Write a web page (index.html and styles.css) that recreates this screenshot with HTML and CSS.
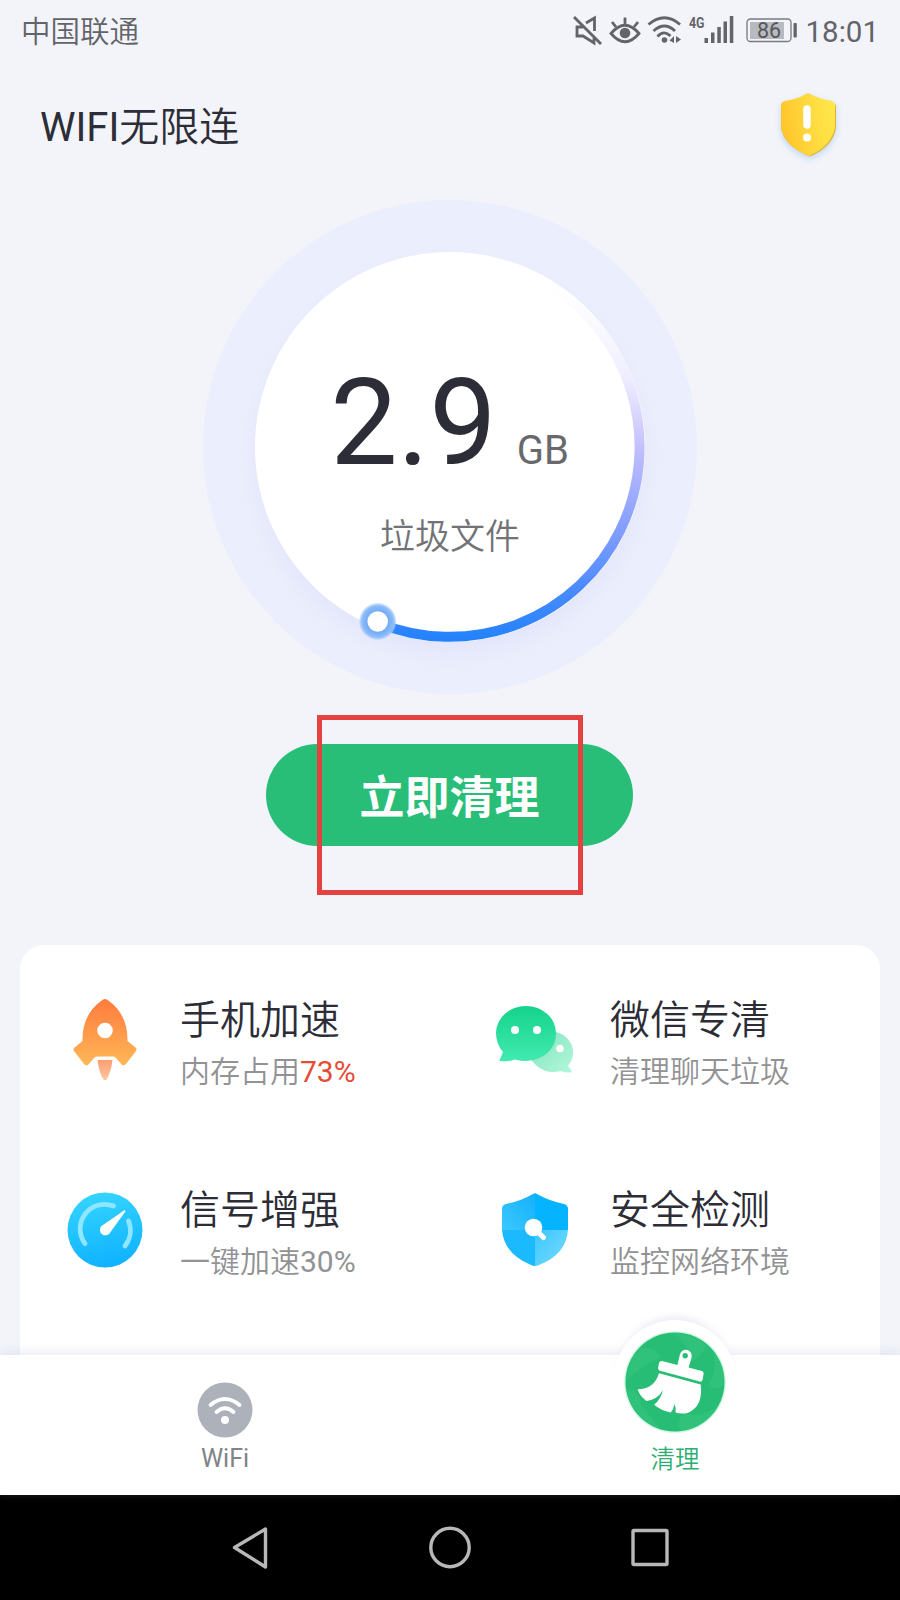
FILE: index.html
```html
<!DOCTYPE html>
<html lang="zh-CN">
<head>
    <meta charset="UTF-8">
    <title>WIFI无限连</title>
    <link rel="stylesheet" href="styles.css">
</head>
<body>
<div class="status">
    <span class="carrier">中国联通</span>
    <svg class="status-icons" width="230" height="60" viewBox="570 0 230 60">
        <!-- mute -->
        <g fill="none" stroke="#626469" stroke-width="2.8">
            <path d="M574 17L601 44"/>
            <path d="M583 27H577V36H583L594 43V38M586 23L594.500 18V31"/>
        </g>
        <!-- eye -->
        <g fill="none" stroke="#626469" stroke-width="2.8">
            <path d="M611 33.500Q625 17 639 33.500Q625 50 611 33.500Z"/>
            <path d="M612 22L616 27M625 17.500V24M638 22L634 27"/>
        </g>
        <circle cx="625" cy="33" r="5.300" fill="#626469"/>
        <!-- wifi -->
        <g fill="none" stroke="#626469" stroke-width="2.9">
            <path d="M648.500 24.500Q664.500 11 680 24.500"/>
            <path d="M653.500 31Q664.500 21 675 31"/>
            <path d="M657.500 36.500Q664 29.500 670.500 36"/>
        </g>
        <circle cx="664.500" cy="40" r="2.800" fill="#626469"/>
        <path d="M674 36V43L669.500 40.500ZM676 43V36L681 39.500Z" fill="#626469"/>
        <!-- signal -->
        <text class="net" x="689" y="28" textLength="15.500" lengthAdjust="spacingAndGlyphs">4G</text>
        <g fill="#626469">
            <rect x="704.500" y="38" width="3.500" height="5"/>
            <rect x="711" y="32.500" width="3.500" height="10.500"/>
            <rect x="717.300" y="27" width="3.500" height="16"/>
            <rect x="723.500" y="21.500" width="3.500" height="21.500"/>
            <rect x="729.800" y="16" width="3.500" height="27"/>
        </g>
        <!-- battery -->
        <rect x="747" y="19" width="44" height="22.500" rx="3.500" fill="none" stroke="#777980" stroke-width="1.300"/>
        <rect x="750" y="22" width="34" height="17" fill="#b9babf"/>
        <rect x="793.500" y="23" width="3.300" height="14.500" rx="1" fill="#626469"/>
        <text class="level" x="757" y="38">86</text>
    </svg>
    <span class="time">18:01</span>
</div>

<div class="header">
    <h1>WIFI<span>无限连</span></h1>
    <svg class="warn" width="70" height="76" viewBox="0 0 70 76">
        <defs>
            <linearGradient id="gold" x1="0" y1="0.200" x2="1" y2="0">
                <stop offset="0" stop-color="#ffc72d"/>
                <stop offset="0.550" stop-color="#ffdc40"/>
                <stop offset="1" stop-color="#fde84c"/>
            </linearGradient>
        </defs>
        <path d="M36 7Q46 13 60 16Q63 17 63 20V40Q61 59 37 69.500Q11 59 8 41V19Q8 16 12 15Q26 13 36 7Z" fill="#e3b22f"/>
        <path d="M35 6Q46 12 59 14Q62 15 62 18V39Q60 58 36 69Q11 59 8 40V18Q8 15 12 14Q25 12 35 6Z" fill="url(#gold)"/>
        <path d="M34 22V38" stroke="#fff" stroke-width="7.500" stroke-linecap="round"/>
        <circle cx="34" cy="50.500" r="4" fill="#fff"/>
    </svg>
</div>

<div class="main">
    <div class="gauge">
        <svg class="ring" width="496" height="496" viewBox="-248 -248 496 496">
            <defs>
                <linearGradient id="arc" gradientUnits="userSpaceOnUse" x1="0" y1="-160" x2="0" y2="190">
                    <stop offset="0" stop-color="#f3f1ff" stop-opacity="0"/>
                    <stop offset="0.240" stop-color="#efeeff" stop-opacity="0.900"/>
                    <stop offset="0.340" stop-color="#dfdcfe"/>
                    <stop offset="0.470" stop-color="#bfbdfc"/>
                    <stop offset="0.700" stop-color="#819dff"/>
                    <stop offset="0.860" stop-color="#4b8bfe"/>
                    <stop offset="1" stop-color="#2683fb"/>
                </linearGradient>
                <radialGradient id="halo">
                    <stop offset="0.500" stop-color="#6ba8f6"/>
                    <stop offset="0.850" stop-color="#8dbcf9"/>
                    <stop offset="1" stop-color="#b5d2fc" stop-opacity="0.500"/>
                </radialGradient>
                <filter id="soft" x="-20%" y="-20%" width="140%" height="140%">
                    <feGaussianBlur stdDeviation="13"/>
                </filter>
            </defs>
            <circle r="247" fill="#ebeefc"/>
            <circle cy="12" r="190" fill="#dcddfa" filter="url(#soft)" opacity="0.700"/>
            <circle r="195" fill="#fff"/>
            <path d="M95 -164.500A190 190 0 0 1 -72 175.800" fill="none" stroke="url(#arc)" stroke-width="10"/>
            <circle cx="-72.300" cy="174.500" r="18.500" fill="url(#halo)"/>
            <circle cx="-72.300" cy="174.500" r="10.300" fill="#fff"/>
        </svg>
        <div class="amount">
            <div class="size">2.9<span>GB</span></div>
            <div class="what">垃圾文件</div>
        </div>
    </div>
    <div class="action">
        <button class="clean">立即清理</button>
        <div class="mark"></div>
    </div>

    <div class="card">
        <div class="item">
            <svg class="icon" width="90" height="90" viewBox="0 0 90 90">
                <defs>
                    <linearGradient id="rocket" x1="0" y1="0" x2="0" y2="1">
                        <stop offset="0" stop-color="#ff7b3d"/>
                        <stop offset="1" stop-color="#ffb757"/>
                    </linearGradient>
                    <linearGradient id="flame" x1="0" y1="0" x2="0" y2="1">
                        <stop offset="0" stop-color="#ff9d70"/>
                        <stop offset="1" stop-color="#ffc9a0"/>
                    </linearGradient>
                </defs>
                <path d="M45 4Q47 4 49 6Q68 20 67.500 46L76 53Q77 54 76 56L66 69Q64 71 62 70L56 63Q55 61.500 53 61.500H37Q35 61.500 34 63L28 70Q26 71 24 69L14 56Q13 54 14 53L22.500 46Q22 20 41 6Q43 4 45 4Z" fill="url(#rocket)"/>
                <circle cx="45" cy="35.500" r="7.800" fill="#fff"/>
                <path d="M37.500 65H52.500Q51 77 47 84Q45 86.500 43 84Q39 77 37.500 65Z" fill="url(#flame)"/>
            </svg>
            <div>
                <h2>手机加速</h2>
                <p>内存占用<em class="hot">73%</em></p>
            </div>
        </div>
        <div class="item">
            <svg class="icon" width="90" height="90" viewBox="0 0 90 90">
                <defs>
                    <linearGradient id="chat" x1="0" y1="0" x2="0" y2="1">
                        <stop offset="0" stop-color="#14d38b"/>
                        <stop offset="1" stop-color="#42eab0"/>
                    </linearGradient>
                    <linearGradient id="chat2" x1="0" y1="0" x2="1" y2="1">
                        <stop offset="0" stop-color="#81e2bb"/>
                        <stop offset="1" stop-color="#b2f8dc"/>
                    </linearGradient>
                </defs>
                <path d="M63 36.500A22 21 0 0 1 78 71L82 76Q82 77.500 80 77.500Q74 77.500 71 76Q52 81 40 63Z" fill="url(#chat2)"/>
                <path d="M36 11A30 27 0 0 1 66 38A30 27 0 0 1 36 66Q30 66 25 64.500Q17 67 10 66Q9 65.500 10 64L13 57Q6 49 6 38A30 27 0 0 1 36 11Z" fill="url(#chat)"/>
                <circle cx="25" cy="35" r="4" fill="#fff"/>
                <circle cx="47" cy="35" r="4" fill="#fff"/>
                <circle cx="70" cy="53.500" r="3.800" fill="#fff"/>
            </svg>
            <div>
                <h2>微信专清</h2>
                <p>清理聊天垃圾</p>
            </div>
        </div>
        <div class="item">
            <svg class="icon" width="90" height="90" viewBox="0 0 90 90">
                <defs>
                    <linearGradient id="speed" x1="0.300" y1="0" x2="0.500" y2="1">
                        <stop offset="0" stop-color="#35d5ff"/>
                        <stop offset="1" stop-color="#0fb2ff"/>
                    </linearGradient>
                </defs>
                <circle cx="45" cy="45" r="37.500" fill="url(#speed)"/>
                <path d="M25 58.500A24.500 24.500 0 0 1 53.500 21M68.500 36A25 25 0 0 1 65 61" fill="none" stroke="#8ee6ff" stroke-width="4.800" stroke-linecap="round"/>
                <path d="M64 25.500Q66 24.500 65 27L50.500 47A5.500 5.500 0 1 1 41.500 41Z" fill="#fff"/>
            </svg>
            <div>
                <h2>信号增强</h2>
                <p>一键加速<em>30%</em></p>
            </div>
        </div>
        <div class="item">
            <svg class="icon" width="90" height="90" viewBox="0 0 90 90">
                <defs>
                    <clipPath id="shield">
                        <path d="M43 9Q45 7.500 47 9Q58 15.500 74 19Q78 20 78 24V44Q77 69 49 80Q45 82 41 80Q13 68 12 44V24Q12 20 16 19Q31 16 43 9Z"/>
                    </clipPath>
                    <linearGradient id="s1" x1="0" y1="1" x2="1" y2="0">
                        <stop offset="0" stop-color="#3cc9ff"/>
                        <stop offset="1" stop-color="#12b0fb"/>
                    </linearGradient>
                    <linearGradient id="s2" x1="0" y1="0" x2="1" y2="1">
                        <stop offset="0" stop-color="#3cc6ff"/>
                        <stop offset="1" stop-color="#7adcff"/>
                    </linearGradient>
                </defs>
                <g clip-path="url(#shield)">
                    <rect x="11" y="7" width="34" height="38" fill="url(#s1)"/>
                    <rect x="45" y="7" width="34" height="38" fill="#06b3ff"/>
                    <rect x="11" y="45" width="34" height="38" fill="#1bb9fd"/>
                    <rect x="45" y="45" width="34" height="38" fill="url(#s2)"/>
                </g>
                <path d="M47 46L53.500 52.500" stroke="#fff" stroke-width="5" stroke-linecap="round"/>
                <circle cx="43.500" cy="42.500" r="8.800" fill="#fff"/>
            </svg>
            <div>
                <h2>安全检测</h2>
                <p>监控网络环境</p>
            </div>
        </div>
    </div>
</div>

<div class="tabs">
    <div class="tab">
        <svg width="56" height="56" viewBox="0 0 56 56">
            <circle cx="28" cy="28" r="27.500" fill="#adb2ba"/>
            <path d="M13.500 23Q28 11 42.500 23M19.500 30Q28 22.500 36.500 30" fill="none" stroke="#fff" stroke-width="3.800" stroke-linecap="round"/>
            <circle cx="28" cy="38" r="4" fill="#fff"/>
        </svg>
        <span>WiFi</span>
    </div>
    <div class="tab active">
        <div class="bump">
            <svg width="102" height="102" viewBox="-51 -51 102 102">
                <circle r="50.800" fill="#c9f8df"/>
                <circle r="49.500" fill="#27bd74"/>
                <g fill="#45cd8a" opacity="0.300">
                    <path d="M0 -49A49 49 0 0 1 31 -37Q27 -24 15 -20Q14 -36 0 -49Z"/>
                    <path d="M37 -32A49 49 0 0 1 49 3Q40 9 33 4Q44 -14 37 -32Z"/>
                    <path d="M43 23A49 49 0 0 1 5 49Q1 37 10 31Q28 37 43 23Z"/>
                    <path d="M-35 -34Q-20 -36 -14 -24Q-32 -18 -48 -2A49 49 0 0 1 -35 -34Z"/>
                    <path d="M-48 7Q-35 8 -34 22Q-25 35 -16 46A49 49 0 0 1 -48 7Z"/>
                </g>
                <g fill="#fff" transform="translate(0.500 0.500) scale(0.970)">
                    <path d="M-13 -22Q-16 -23 -17 -20L-18 -15Q-18 -13 -16 -12L25 -1Q27 0 28 -3L29 -9Q29 -12 26 -12L13.500 -15.500L16.500 -25.500A6.200 6.200 0 1 0 4.500 -28.500L2 -18Z"/>
                    <path d="M-17 -9.500L26 2Q28 21 18 28Q11 34 0 31Q1 27 -1 22Q-2 28 -5 31Q-15 29 -22 23Q-15 17 -13 8Q-19 18 -30 19Q-37 14 -39 7Q-22 7 -17 -9.500Z"/>
                </g>
                <circle cx="10.200" cy="-26.200" r="2.700" fill="#27bd74"/>
            </svg>
        </div>
        <span>清理</span>
    </div>
</div>

<div class="nav">
    <svg width="40" height="46" viewBox="0 0 40 46"><path d="M4.500 22.500L35.500 4V42Z"/></svg>
    <svg width="46" height="46" viewBox="0 0 46 46"><circle cx="23" cy="22.500" r="19.200"/></svg>
    <svg width="40" height="46" viewBox="0 0 40 46"><rect x="3" y="5.500" width="34" height="34" rx="1"/></svg>
</div>
</body>
</html>
```

FILE: styles.css
```css
* {margin:0; padding:0; box-sizing:border-box;}

body {width:900px; height:1600px; overflow:hidden; background:#f2f4f9; display:flex; flex-direction:column;
    font-family:Roboto, "Noto Sans CJK SC", sans-serif; color:#2c2d36;}
svg {display:block; flex:none;}

.status {height:60px; display:flex; align-items:center; padding:0 21px 0 21px; color:#626469;}
.carrier {flex:1; font-size:29.5px; line-height:60px; font-weight:350; padding-top:3px;}
.time {width:79px; text-align:right; font-size:29.5px; line-height:60px; padding-top:3px; white-space:nowrap;}
.net {font:bold 14px Roboto, sans-serif; fill:#626469;}
.level {font:21.5px Roboto, sans-serif; fill:#55575c;}

.header {height:130px; display:flex; justify-content:space-between; align-items:center; padding:0 57px 0 40px;}
.header h1 {font-size:40px; line-height:60px; font-weight:400; padding-top:5px;}
.header h1 span {font-weight:350;}
.warn {filter:drop-shadow(0 3px 3px #c3d6f4);}

.main {height:1165px; display:flex; flex-direction:column; align-items:center; overflow:hidden; padding-top:9px;}
.gauge {display:grid; width:496px; height:496px; flex:none;}
.ring, .amount {grid-area:1 / 1;}
.amount {z-index:1; text-align:center; padding-top:152px;}
.size {font-size:120px; line-height:144px; padding-right:1px;}
.size span {font-size:40px; color:#68696c; margin-left:20px;}
.what {font-size:35px; line-height:50px; margin-top:-10px; color:#727376; font-weight:350;}

.action {position:relative; margin:49px 1px 0 0;}
.clean {display:block; width:367px; height:102px; border:0; border-radius:51px; background:#29be78; color:#fff;
    padding-top:7px; font:bold 45px/95px Roboto, "Noto Sans CJK SC", sans-serif;}
.mark {position:absolute; left:51px; top:-29px; width:266px; height:180px; border:5px solid #e44141;}

.card {width:860px; flex:1; margin-top:99px; background:#fff; border-radius:24px 24px 0 0;
    display:grid; grid-template-columns:430px 430px; grid-auto-rows:190px;}
.item {display:flex; padding:50px 0 0 40px;}
.item h2 {font-size:40px; line-height:50px; font-weight:350; padding-top:1px;}
.item p {font-size:30px; line-height:40px; margin-top:6px; color:#929295; font-weight:350;}
.item em {font-style:normal; font-weight:400;}
.item .hot {color:#e64c35;}
.icon {margin-right:30px;}

.tabs {height:140px; background:#fff; display:flex; box-shadow:0 -3px 10px rgba(190,192,225,.3); position:relative;}
.tab {flex:1; display:flex; flex-direction:column; align-items:center; padding-top:27px; color:#808388; font-size:25px;}
.tab span {line-height:30px; margin-top:6px;}
.active {padding-top:0; color:#2daf73; font-weight:350; font-size:24.5px;}
.bump {width:124px; height:124px; margin-top:-35px; padding:11px; border-radius:50%;
    background:#fff; box-shadow:0 -9px 9px -7px rgba(190,192,225,.4);}
.active span {margin-top:1px;}

.nav {height:105px; background:#000; display:flex; align-items:center; justify-content:center; gap:157px;}
.nav svg {fill:none; stroke:#b8b8b8; stroke-width:3.4; stroke-linejoin:round;}
```
